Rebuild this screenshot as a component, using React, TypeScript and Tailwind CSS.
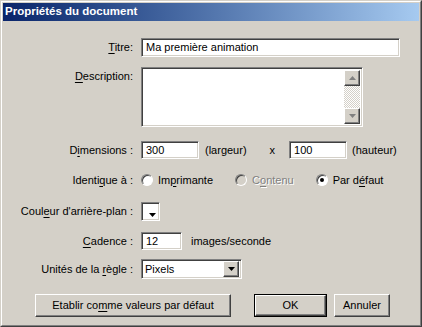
import React from 'react';

const sunken =
  'bg-white border border-t-[#808080] border-l-[#808080] border-b-white border-r-white shadow-[inset_1px_1px_0_#404040,inset_-1px_-1px_0_#d4d0c8]';
const raised =
  'bg-[#d4d0c8] border border-t-white border-l-white border-b-[#404040] border-r-[#404040] shadow-[inset_-1px_-1px_0_#808080]';

const Label: React.FC<{ children: React.ReactNode }> = ({ children }) => (
  <div className="w-[138px] shrink-0 pr-[8px] text-right">{children}</div>
);

const U: React.FC<{ children: React.ReactNode }> = ({ children }) => (
  <span className="underline underline-offset-[2px]">{children}</span>
);

const Arrow: React.FC<{ down?: boolean; color?: string }> = ({ down, color = '#000' }) => (
  <svg width="7" height="4" viewBox="0 0 7 4">
    <path d={down ? 'M0 0h7L3.5 4z' : 'M0 4h7L3.5 0z'} fill={color} />
  </svg>
);

const Radio: React.FC<{ checked?: boolean; disabled?: boolean }> = ({ checked, disabled }) => (
  <div
    className={`w-[12px] h-[12px] rounded-full border border-t-[#808080] border-l-[#808080] border-b-white border-r-white flex items-center justify-center ${
      disabled ? 'bg-[#d4d0c8]' : 'bg-white'
    } shadow-[inset_1px_1px_0_#404040]`}
  >
    {checked && <div className="w-[4px] h-[4px] rounded-full bg-black" />}
  </div>
);

const App: React.FC = () => {
  return (
    <div className="w-[422px] h-[327px] bg-[#d4d0c8] font-['Liberation_Sans',Arial,sans-serif] text-[11px] text-black border border-t-[#d4d0c8] border-l-[#d4d0c8] border-b-[#404040] border-r-[#404040]">
      <div className="h-full border border-t-white border-l-white border-b-[#808080] border-r-[#808080] p-[1px] flex flex-col">
        {/* title bar */}
        <div className="h-[18px] bg-linear-to-r from-[#0a246a] to-[#a6caf0] flex items-center pl-[2px]">
          <span className="text-white font-bold text-[11.5px]">Propriétés du document</span>
        </div>

        {/* Titre */}
        <div className="flex items-center mt-[17px]">
          <Label>
            <U>T</U>itre:
          </Label>
          <div className={`${sunken} w-[259px] h-[19px] flex items-center pl-[4px]`}>Ma première animation</div>
        </div>

        {/* Description */}
        <div className="flex items-start mt-[10px]">
          <Label>
            <div className="pt-[1px]">
              <U>D</U>escription:
            </div>
          </Label>
          <div className={`${sunken} w-[222px] h-[60px] p-[2px] flex justify-end`}>
            <div className="w-[16px] flex flex-col">
              <div className={`${raised} h-[16px] flex items-center justify-center`}>
                <Arrow color="#808080" />
              </div>
              <div className="flex-1 bg-[repeating-conic-gradient(#ffffff_0_25%,#d4d0c8_0_50%)] bg-[length:2px_2px]" />
              <div className={`${raised} h-[16px] flex items-center justify-center`}>
                <Arrow down color="#808080" />
              </div>
            </div>
          </div>
        </div>

        {/* Dimensions */}
        <div className="flex items-center mt-[14px]">
          <Label>
            D<U>i</U>mensions :
          </Label>
          <div className={`${sunken} w-[58px] h-[18px] flex items-center pl-[4px]`}>300</div>
          <span className="ml-[6px]">(largeur)</span>
          <span className="ml-[23px]">x</span>
          <div className={`${sunken} ml-[14px] w-[58px] h-[18px] flex items-center pl-[4px]`}>100</div>
          <span className="ml-[5px]">(hauteur)</span>
        </div>

        {/* Identique */}
        <div className="flex items-center mt-[13px] h-[16px]">
          <Label>
            Identi<U>q</U>ue à :
          </Label>
          <div className="flex items-center gap-[5px]">
            <Radio />
            <span>
              Im<U>p</U>rimante
            </span>
          </div>
          <div className="flex items-center gap-[5px] ml-[22px]">
            <Radio disabled />
            <span className="text-[#808080] [text-shadow:1px_1px_0_#ffffff]">
              C<U>o</U>ntenu
            </span>
          </div>
          <div className="flex items-center gap-[5px] ml-[22px]">
            <Radio checked />
            <span>
              Par d<U>é</U>faut
            </span>
          </div>
        </div>

        {/* Couleur */}
        <div className="flex items-center mt-[14px]">
          <Label>
            Coul<U>e</U>ur d'arrière-plan :
          </Label>
          <div className={`${sunken} w-[19px] h-[19px] flex items-end justify-end pr-[3px] pb-[3px]`}>
            <Arrow down />
          </div>
        </div>

        {/* Cadence */}
        <div className="flex items-center mt-[11px]">
          <Label>
            <U>C</U>adence :
          </Label>
          <div className={`${sunken} w-[41px] h-[18px] flex items-center pl-[4px]`}>12</div>
          <span className="ml-[9px]">images/seconde</span>
        </div>

        {/* Unités */}
        <div className="flex items-center mt-[9px]">
          <Label>
            Unités de la <U>r</U>ègle :
          </Label>
          <div className={`${sunken} w-[101px] h-[20px] flex items-center p-[2px]`}>
            <span className="flex-1 pl-[1px]">Pixels</span>
            <div className={`${raised} w-[16px] h-[16px] flex items-center justify-center`}>
              <Arrow down />
            </div>
          </div>
        </div>

        {/* Buttons */}
        <div className="flex items-center mt-[15px]">
          <button className={`${raised} ml-[32px] w-[196px] h-[23px]`}>
            Etablir co<U>m</U>me valeurs par défaut
          </button>
          <div className="ml-[23px] border border-black">
            <button className={`${raised} w-[71px] h-[21px] block`}>OK</button>
          </div>
          <button className={`${raised} ml-[7px] w-[56px] h-[23px]`}>Annuler</button>
        </div>
      </div>
    </div>
  );
};

export default App;
